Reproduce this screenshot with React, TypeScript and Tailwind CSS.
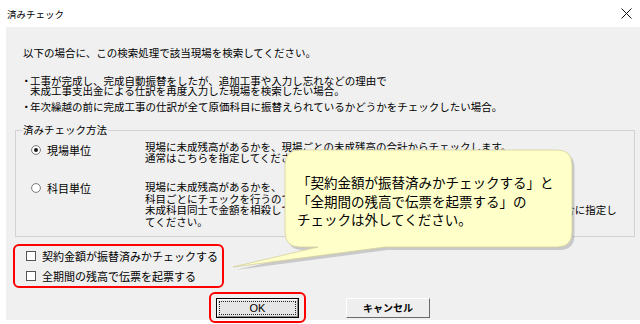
const jp = "font-['Noto_Sans_CJK_JP','Noto_Sans',sans-serif]";

function Radio({ checked }: { checked: boolean }) {
  return (
    <svg width="10" height="10" viewBox="0 0 10 10" className="shrink-0">
      <circle cx="5" cy="5" r="4.4" fill="#fff" stroke="#6d6d6d" strokeWidth="0.9" />
      {checked && <circle cx="5" cy="5" r="2" fill="#1a1a1a" />}
    </svg>
  );
}

function Check({ label }: { label: string }) {
  return (
    <div className="h-[20px] flex items-center gap-[6px]">
      <div className="w-[10px] h-[10px] bg-white border border-[#555] shrink-0" />
      <span className="text-[11px] leading-[12px] whitespace-nowrap">{label}</span>
    </div>
  );
}

function Callout() {
  const shape =
    "M300 150 H557 Q572 150 572 165 V232 Q572 247 557 247 H385 L233 267 L318 247 H300 Q285 247 285 232 V165 Q285 150 300 150 Z";
  return (
    <>
      <svg
        className="absolute left-0 top-0 pointer-events-none"
        width="640"
        height="324"
        viewBox="0 0 640 324"
      >
        <path d={shape} transform="translate(2.5 3)" fill="#9a9a9a" opacity="0.45" />
        <path d={shape} fill="#ffffca" stroke="#d6d19c" strokeWidth="0.8" />
      </svg>
      <div className={`absolute left-[297px] top-[173px] text-[13.5px] leading-[18.5px] text-black whitespace-nowrap ${jp}`}>
        <div>「契約金額が振替済みかチェックする」と</div>
        <div>「全期間の残高で伝票を起票する」の</div>
        <div>チェックは外してください。</div>
      </div>
    </>
  );
}

export default function App() {
  return (
    <div className={`relative w-[640px] h-[324px] bg-white overflow-hidden text-black ${jp}`}>
      {/* title bar */}
      <div className="h-[27px] flex items-center justify-between pl-[7px] pr-[7px]">
        <span className="text-[9.5px] leading-[12px]">済みチェック</span>
        <svg width="11" height="11" viewBox="0 0 11 11" className="mr-[1px]">
          <path d="M0.5 0.5 L10.5 10.5 M10.5 0.5 L0.5 10.5" stroke="#111" strokeWidth="1" />
        </svg>
      </div>

      <div className="ml-[6px] w-[634px] h-[293px] bg-[#f0f0f0] flex flex-col text-[10.5px]">
        <div className="mt-[20px] pl-[17px] leading-[12px] whitespace-nowrap">
          以下の場合に、この検索処理で該当現場を検索してください。
        </div>
        <div className="mt-[17px] pl-[15px] flex leading-[10px] whitespace-nowrap">
          <span className="w-[9px]">・</span>
          <div>
            <div>工事が完成し、完成自動振替をしたが、追加工事や入力し忘れなどの理由で</div>
            <div>未成工事支出金による仕訳を再度入力した現場を検索したい場合。</div>
          </div>
        </div>
        <div className="mt-[6px] pl-[15px] flex leading-[10px] whitespace-nowrap">
          <span className="w-[9px]">・</span>
          <div>年次繰越の前に完成工事の仕訳が全て原価科目に振替えられているかどうかをチェックしたい場合。</div>
        </div>

        <fieldset className="mt-[12px] ml-[9px] w-[620px] border border-[#d2d2d2] pb-[9px]">
          <legend className="ml-[6px] px-[1px] leading-[12px] text-[10.5px]">済みチェック方法</legend>
          <div className="pt-[5px] flex flex-col gap-[18px]">
            <div className="flex">
              <div className="w-[129px] pl-[15px] pt-[3px] flex items-center gap-[6px] h-fit">
                <Radio checked />
                <span className="text-[11px] leading-[12px]">現場単位</span>
              </div>
              <div className="leading-[11px] whitespace-nowrap">
                <div>現場に未成残高があるかを、現場ごとの未成残高の合計からチェックします。</div>
                <div>通常はこちらを指定してください。</div>
              </div>
            </div>
            <div className="flex">
              <div className="w-[129px] pl-[15px] pt-[1px] flex items-center gap-[6px] h-fit">
                <Radio checked={false} />
                <span className="text-[11px] leading-[12px]">科目単位</span>
              </div>
              <div className="leading-[11.5px] whitespace-nowrap">
                <div>現場に未成残高があるかを、</div>
                <div>科目ごとにチェックを行うので</div>
                <div>未成科目同士で金額を相殺している可能性がある場合や、科目単位で詳細に確認したい場合に指定し</div>
                <div>てください。</div>
              </div>
            </div>
          </div>
        </fieldset>

        <div className="mt-[7px] ml-[7px] w-[211px] h-[44px] border-2 border-[#ff0000] rounded-[6px] pl-[11px] flex flex-col">
          <Check label="契約金額が振替済みかチェックする" />
          <Check label="全期間の残高で伝票を起票する" />
        </div>

        <div className="mt-[4px] ml-[203px] flex items-start">
          <div className="w-[97px] h-[31px] border-2 border-[#ff0000] rounded-[6px] flex items-center justify-center">
            <div className="w-[83px] h-[20px] border border-black">
              <div className="w-full h-full border border-t-white border-l-white border-b-[#8a8a8a] border-r-[#8a8a8a] bg-[#e6e6e6] p-[1px]">
                <div className="w-full h-full border border-dotted border-[#222] flex items-center justify-center text-[11px] leading-[12px] font-['Liberation_Sans',sans-serif]">
                  OK
                </div>
              </div>
            </div>
          </div>
          <div className="ml-[40px] mt-[6px] w-[84px] h-[20px] border border-t-white border-l-white border-b-[#696969] border-r-[#696969] bg-[#eeeeee] flex items-center justify-center">
            <span className="text-[10px] leading-[12px] font-bold">キャンセル</span>
          </div>
        </div>
      </div>

      <Callout />
    </div>
  );
}
